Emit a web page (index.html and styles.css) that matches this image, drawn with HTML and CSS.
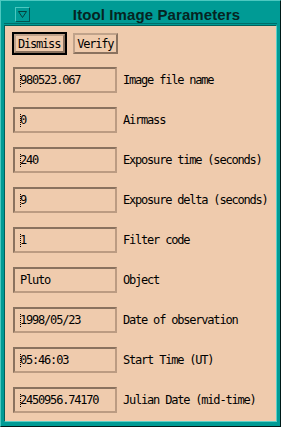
FILE: index.html
```html
<!DOCTYPE html>
<html lang="en">
<head>
    <meta charset="UTF-8">
    <title>Itool Image Parameters</title>
    <link rel="stylesheet" href="styles.css">
</head>
<body>
    <div class="window">
        <div class="titlebar">
            <div class="menu-btn">
                <svg width="9" height="7" viewBox="0 0 9 7"><path d="M0.5 0.5 H8.5 L4.5 6.5 Z" fill="none" stroke="#05403d" stroke-width="1"/></svg>
            </div>
            <div class="title">Itool Image Parameters</div>
        </div>

        <div class="panel">
            <div class="buttons">
                <div class="default-ring"><button class="btn">Dismiss</button></div>
                <button class="btn">Verify</button>
            </div>

            <div class="row"><div class="field"><span class="caret"></span>980523.067</div><span class="label">Image file name</span></div>
            <div class="row"><div class="field"><span class="caret"></span>0</div><span class="label">Airmass</span></div>
            <div class="row"><div class="field"><span class="caret"></span>240</div><span class="label">Exposure time (seconds)</span></div>
            <div class="row"><div class="field"><span class="caret"></span>9</div><span class="label">Exposure delta (seconds)</span></div>
            <div class="row"><div class="field"><span class="caret"></span>1</div><span class="label">Filter code</span></div>
            <div class="row"><div class="field">Pluto</div><span class="label">Object</span></div>
            <div class="row"><div class="field"><span class="caret"></span>1998/05/23</div><span class="label">Date of observation</span></div>
            <div class="row"><div class="field"><span class="caret"></span>05:46:03</div><span class="label">Start Time (UT)</span></div>
            <div class="row"><div class="field"><span class="caret"></span>2450956.74170</div><span class="label">Julian Date (mid-time)</span></div>
        </div>
    </div>
</body>
</html>
```

FILE: styles.css
```css
* {
    margin: 0;
    padding: 0;
    box-sizing: border-box;
}

body {
    width: 281px;
    height: 427px;
    background: #009b95;
    font-family: 'DejaVu Sans Mono', monospace;
    font-size: 12px;
    letter-spacing: -1.2px;
    color: #000;
}

.window {
    width: 281px;
    height: 427px;
    display: flex;
    flex-direction: column;
    background: #009b95;
    border-top: 1px solid #4cc8c0;
    border-left: 1px solid #4cc8c0;
    border-right: 1px solid #001a18;
    border-bottom: 1px solid #001a18;
    padding: 1px 3px 4px 3px;
}

.titlebar {
    height: 22px;
    display: flex;
    align-items: center;
    padding-top: 3px;
    border-bottom: 1px solid #006e69;
    margin-bottom: 1px;
}

.menu-btn {
    width: 15px;
    height: 15px;
    margin-left: 11px;
    display: flex;
    align-items: center;
    justify-content: center;
    border-top: 1px solid #4cc8c0;
    border-left: 1px solid #4cc8c0;
    border-right: 1px solid #005652;
    border-bottom: 1px solid #005652;
}

.title {
    flex: 1;
    text-align: center;
    font-family: 'Liberation Sans', Arial, sans-serif;
    font-weight: bold;
    font-size: 15px;
    letter-spacing: 0.1px;
    color: #062422;
    padding-left: 6px;
}

.panel {
    flex: 1;
    background: #efcbad;
    border-top: 1px solid #00605b;
    border-left: 1px solid #00605b;
    border-right: 1px solid #5ccfc7;
    border-bottom: 1px solid #5ccfc7;
    padding: 6px 6px 6px 7px;
    display: flex;
    flex-direction: column;
    gap: 14px;
}

.buttons {
    display: flex;
    align-items: center;
    gap: 6px;
    margin-bottom: -2px;
}

.default-ring {
    border: 2px solid #000;
    display: flex;
}

.btn {
    font-family: 'DejaVu Sans Mono', monospace;
    font-size: 12px;
    letter-spacing: -1.2px;
    color: #000;
    background: #efcbad;
    height: 21px;
    padding: 0 3px 0 2px;
    border-top: 2px solid #c0a28a;
    border-left: 2px solid #c0a28a;
    border-right: 2px solid #8a725f;
    border-bottom: 2px solid #8a725f;
}

.default-ring .btn {
    height: 19px;
}

.row {
    display: flex;
    align-items: center;
    height: 26px;
}

.field {
    width: 104px;
    height: 26px;
    margin-left: 1px;
    display: flex;
    align-items: center;
    padding-left: 5px;
    border-top: 2px solid #8a725f;
    border-left: 2px solid #8a725f;
    border-right: 2px solid #bb9b82;
    border-bottom: 2px solid #bb9b82;
}

.caret {
    width: 0;
    height: 13px;
    border-left: 1px dotted #000;
    margin-right: -1px;
}

.label {
    margin-left: 6px;
    white-space: nowrap;
}
```
